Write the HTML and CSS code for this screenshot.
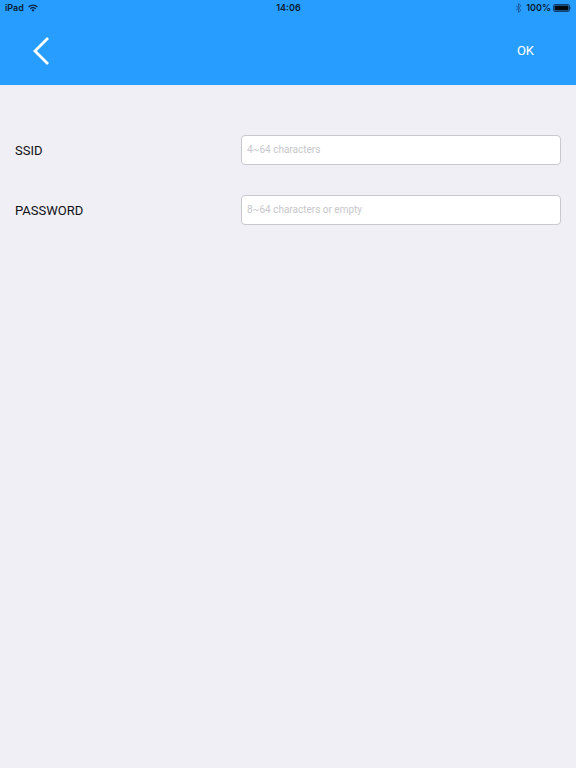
FILE: index.html
```
<!DOCTYPE html>
<html lang="en">
<head>
  <meta charset="utf-8">
  <meta name="viewport" content="width=device-width, initial-scale=1">
  <title>Wi-Fi settings</title>
  <link rel="stylesheet" href="styles.css">
</head>
<body>
  <header>
    <div class="status">
      <div class="status-left">
        <span>iPad</span>
        <svg width="10" height="8" viewBox="0 0 20 16" fill="none" stroke="#0b2747" stroke-width="2.6">
          <path d="M1 6a13 13 0 0 1 18 0M4.500 9.500a8 8 0 0 1 11 0"/>
          <path d="M10 15.500L6.800 12.200a4.600 4.600 0 0 1 6.400 0z" fill="#0b2747" stroke="none"/>
        </svg>
      </div>
      <span>14:06</span>
      <div class="status-right">
        <svg width="7" height="10" viewBox="0 0 14 20" fill="none" stroke="#1c5b99" stroke-width="2">
          <path d="M2 5.500l10 9L7 19V1l5 4.500-10 9"/>
        </svg>
        <span>100%</span>
        <svg class="battery" width="19" height="8" viewBox="0 0 19 8">
          <rect x="0.500" y="0.500" width="16" height="7" rx="1.500" fill="none" stroke="#123f70"/>
          <rect x="1.500" y="1.500" width="14" height="5" rx="0.500" fill="#000810"/>
          <path d="M17.500 2.500q1.500 1.500 0 3z" fill="#123f70"/>
        </svg>
      </div>
    </div>
    <nav>
      <button type="button" class="back" aria-label="Back">
        <svg width="16" height="28" viewBox="0 0 16 28" fill="none" stroke="#fff" stroke-width="2.800">
          <path d="M15 1L2 14l13 13"/>
        </svg>
      </button>
      <button type="submit" form="wifi" class="ok">OK</button>
    </nav>
  </header>
  <form id="wifi">
    <div class="row">
      <label for="ssid">SSID</label>
      <input type="text" id="ssid" placeholder="4~64 characters">
    </div>
    <div class="row">
      <label for="password">PASSWORD</label>
      <input type="text" id="password" placeholder="8~64 characters or empty">
    </div>
  </form>
</body>
</html>
```
FILE: styles.css
```
body{
  margin: 0;
  background-color: #efeff5;
  font-family: Roboto, "Liberation Sans", sans-serif;
  color: #101015;
}

header{
  background-color: #279eff;
}

.status{
  display: grid;
  grid-template-columns: 1fr auto 1fr;
  align-items: center;
  height: 16px;
  padding: 0 4px 0 5px;
  color: #061a30;
  font-family: Inter, "Liberation Sans", sans-serif;
  font-size: 9px;
  font-weight: 600;
  line-height: 16px;
}

.status-left,
.status-right{
  display: flex;
  align-items: center;
  gap: 4px;
}

.status-right{
  justify-content: flex-end;
}

.battery{
  margin-left: -2px;
}

nav{
  display: flex;
  align-items: center;
  justify-content: space-between;
  height: 69px;
  padding: 0 32px 0 33px;
}

button{
  display: flex;
  padding: 0;
  border: 0;
  background: none;
  color: #fff;
  font: inherit;
}

.ok{
  padding: 10px;
  font-size: 13px;
}

form{
  display: flex;
  flex-direction: column;
  gap: 30px;
  padding: 50px 15px;
}

.row{
  display: flex;
  align-items: center;
}

label{
  flex: 1;
  font-size: 13px;
}

input{
  box-sizing: border-box;
  width: 320px;
  height: 30px;
  padding: 0 5px 1px;
  border: 1px solid #c8c8d0;
  border-radius: 4px;
  background-color: #fff;
  color: inherit;
  font: inherit;
  font-size: 10px;
}

input::placeholder{
  color: #c7c7cd;
}
```
